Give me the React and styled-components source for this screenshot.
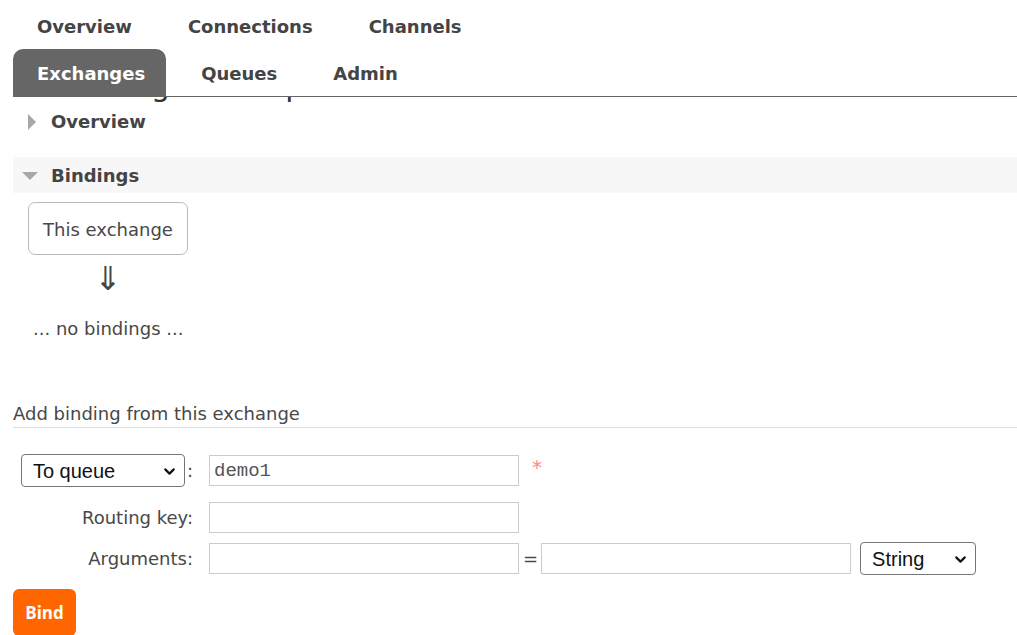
import React from "react";
import styled, { createGlobalStyle } from "styled-components";
import { ChevronDown } from "lucide-react";

const GlobalStyle = createGlobalStyle`
  body {
    margin: 0;
    font-family: "DejaVu Sans", Verdana, sans-serif;
    font-size: 18px;
    color: #484848;
    background: #fff;
  }
`;

const topTabs = ["Overview", "Connections", "Channels"];
const bottomTabs = ["Exchanges", "Queues", "Admin"];

function Dropdown({ width, gap, options, value }) {
  return (
    <SelectWrap $width={width} $gap={gap}>
      <Select defaultValue={value}>
        {options.map((o) => (
          <option key={o.value} value={o.value}>
            {o.label}
          </option>
        ))}
      </Select>
      <Chevron>
        <ChevronDown size={17} strokeWidth={3} />
      </Chevron>
    </SelectWrap>
  );
}

export default function App() {
  return (
    <Page>
      <GlobalStyle />
      <Header>
        <TabRow>
          {topTabs.map((t) => (
            <Tab key={t}>{t}</Tab>
          ))}
        </TabRow>
        <TabRow>
          {bottomTabs.map((t) => (
            <Tab key={t} $active={t === "Exchanges"}>
              {t}
            </Tab>
          ))}
        </TabRow>
      </Header>

      <HeadingPeek>
        <Title>Exchange: transport</Title>
      </HeadingPeek>

      <Section>
        <SectionHead>
          <Toggle>
            <svg width="16" height="16" viewBox="0 0 16 16">
              <polygon points="6,0 14,8 6,16" fill="#a8a8a8" />
            </svg>
          </Toggle>
          Overview
        </SectionHead>
      </Section>

      <Section>
        <SectionHead $open>
          <Toggle>
            <svg width="16" height="16" viewBox="0 0 16 16">
              <polygon points="0,4 16,4 8,12" fill="#a8a8a8" />
            </svg>
          </Toggle>
          Bindings
        </SectionHead>
        <BindingsBody>
          <ExchangeBox>This exchange</ExchangeBox>
          <Arrow>⇓</Arrow>
          <NoBindings>... no bindings ...</NoBindings>
        </BindingsBody>
      </Section>

      <SubTitle>Add binding from this exchange</SubTitle>

      <Form>
        <Row $space={0}>
          <LabelCell>
            <Dropdown
              width={164}
              value="queue"
              options={[
                { value: "queue", label: "To queue" },
                { value: "exchange", label: "To exchange" },
              ]}
            />
            <span>:</span>
          </LabelCell>
          <TextInput defaultValue="demo1" />
          <Required>*</Required>
        </Row>
        <Row $space={15}>
          <LabelCell>Routing key:</LabelCell>
          <TextInput />
        </Row>
        <Row $space={9}>
          <LabelCell>Arguments:</LabelCell>
          <TextInput />
          <Equals>=</Equals>
          <TextInput />
          <Dropdown
            width={116}
            gap={9}
            value="string"
            options={[
              { value: "string", label: "String" },
              { value: "number", label: "Number" },
              { value: "boolean", label: "Boolean" },
            ]}
          />
        </Row>
        <BindButton>Bind</BindButton>
      </Form>
    </Page>
  );
}

const Page = styled.div`
  padding-left: 13px;
  min-height: 100vh;
  box-sizing: border-box;
`;

const Header = styled.div`
  position: relative;
  z-index: 1;
  background: #fff;
  padding-top: 2px;
  border-bottom: 1px solid #666;
  display: flex;
  flex-direction: column;
`;

const TabRow = styled.div`
  display: flex;
  gap: 11px;
`;

const Tab = styled.a`
  height: 47px;
  box-sizing: border-box;
  display: flex;
  align-items: center;
  padding: 2px 21px 0 24px;
  font-weight: bold;
  font-size: 18px;
  border-radius: 10px 10px 0 0;
  cursor: pointer;
  color: ${(p) => (p.$active ? "#fff" : "#444")};
  background: ${(p) => (p.$active ? "#666" : "transparent")};
`;

/* page is scrolled: only the foot of the heading shows under the header */
const HeadingPeek = styled.div`
  height: 6px;
  overflow: hidden;
  position: relative;
`;

const Title = styled.h1`
  margin: 0;
  padding-left: 29px;
  font-size: 30px;
  line-height: 40px;
  height: 40px;
  transform: translateY(-31px);
  font-weight: normal;
  color: #333;
  white-space: nowrap;
`;

const Section = styled.div`
  & + & {
    margin-top: 18px;
  }
`;

const SectionHead = styled.h2`
  margin: 0;
  height: 36px;
  display: flex;
  align-items: center;
  padding: 1px 0 0 9px;
  box-sizing: border-box;
  font-size: 18px;
  font-weight: bold;
  color: #444;
  background: ${(p) => (p.$open ? "#f7f7f7" : "transparent")};
`;

const Toggle = styled.span`
  display: flex;
  width: 16px;
  margin-right: 13px;
`;

const BindingsBody = styled.div`
  padding: 9px 0 0 15px;
  display: flex;
  flex-direction: column;
  align-items: flex-start;
`;

const ExchangeBox = styled.div`
  width: 160px;
  height: 53px;
  box-sizing: border-box;
  border: 1px solid #bbb;
  border-radius: 7px;
  display: flex;
  align-items: center;
  justify-content: center;
  padding-top: 2px;
`;

const Arrow = styled.div`
  width: 160px;
  text-align: center;
  font-size: 33px;
  line-height: 30px;
  margin-top: 9px;
  color: #444;
`;

const NoBindings = styled.div`
  margin-top: 24px;
  padding-left: 5px;
  line-height: 22px;
`;

const SubTitle = styled.h3`
  margin: 63px 0 0;
  font-size: 18px;
  font-weight: normal;
  line-height: 22px;
  padding-bottom: 2px;
  border-bottom: 1px solid #e0e0e0;
`;

const Form = styled.div`
  margin-top: 26px;
  display: flex;
  flex-direction: column;
  align-items: flex-start;
`;

const Row = styled.div`
  display: flex;
  align-items: center;
  margin-top: ${(p) => p.$space}px;
`;

const LabelCell = styled.label`
  width: 180px;
  display: flex;
  align-items: center;
  justify-content: flex-end;
  gap: 2px;
  margin-right: 16px;
  white-space: nowrap;
`;

const SelectWrap = styled.div`
  position: relative;
  width: ${(p) => p.$width}px;
  height: 33px;
  margin-left: ${(p) => p.$gap || 0}px;
  flex-shrink: 0;
`;

const Select = styled.select`
  appearance: none;
  width: 100%;
  height: 100%;
  box-sizing: border-box;
  font-family: "Liberation Sans", Arial, sans-serif;
  font-size: 20px;
  color: #111;
  background: #fff;
  border: 1px solid #767676;
  border-radius: 4px;
  padding: 0 28px 0 11px;
  outline: none;
`;

const Chevron = styled.span`
  position: absolute;
  right: 7px;
  top: 9px;
  display: flex;
  color: #111;
  pointer-events: none;
`;

const TextInput = styled.input`
  width: 310px;
  height: 31px;
  box-sizing: border-box;
  border: 1px solid #ccc;
  padding: 0 4px;
  font-family: "Liberation Mono", "Courier New", monospace;
  font-size: 19px;
  color: #555;
  outline: none;
`;

const Required = styled.span`
  align-self: flex-start;
  margin: 3px 0 0 13px;
  font-size: 20px;
  line-height: 20px;
  color: #f88;
`;

const Equals = styled.span`
  margin: 0 3px 0 4px;
`;

const BindButton = styled.button`
  margin-top: 14px;
  width: 63px;
  height: 47px;
  border: none;
  border-radius: 6px;
  background: #f60;
  color: #fff;
  font-family: "Open Sans", "Liberation Sans", sans-serif;
  font-weight: bold;
  font-size: 17px;
  cursor: pointer;
`;
